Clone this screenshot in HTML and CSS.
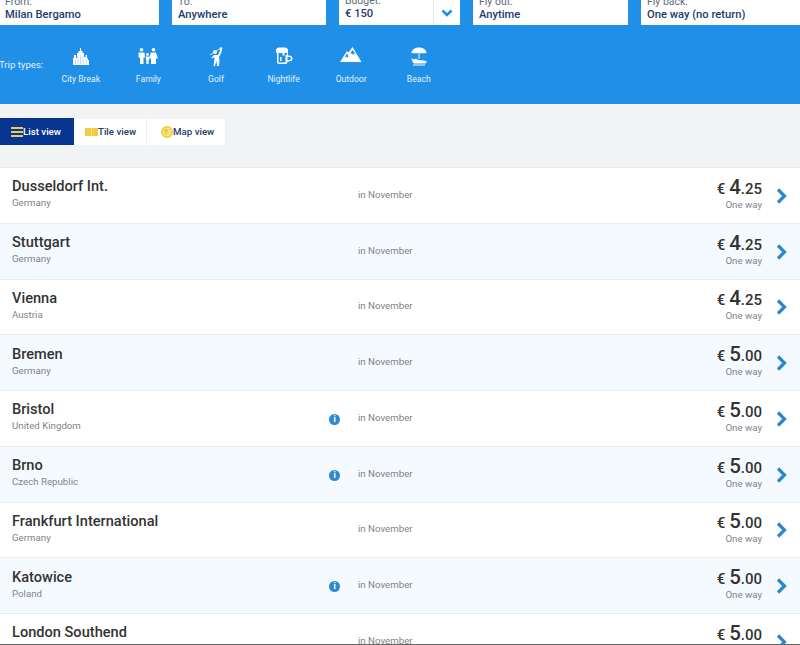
FILE: index.html
```html
<!DOCTYPE html>
<html lang="en">
<head>
  <meta charset="UTF-8">
  <meta name="viewport" content="width=device-width, initial-scale=1">
  <title>Fare finder</title>
  <link rel="stylesheet" href="styles.css">
</head>
<body>
  <header class="search">
    <div class="fields">
      <div class="field field-from"><label>From:</label><strong>Milan Bergamo</strong></div>
      <div class="field field-to"><label>To:</label><strong>Anywhere</strong></div>
      <div class="field field-budget">
        <div class="budget-value"><label>Budget:</label><strong>€ 150</strong></div>
        <div class="budget-toggle">
          <svg width="12" height="8" viewBox="0 0 12 8"><path d="M1.5 1.5 6 6l4.500-4.500" fill="none" stroke="#1f8fe0" stroke-width="2.600"/></svg>
        </div>
      </div>
      <div class="field field-out"><label>Fly out:</label><strong>Anytime</strong></div>
      <div class="field field-back"><label>Fly back:</label><strong>One way (no return)</strong></div>
    </div>
    <div class="trip-types">
      <span class="trip-label">Trip types:</span>
      <div class="trip">
        <svg width="18" height="20" viewBox="0 0 18 20" fill="#fff"><path d="M1 19v-7h1V9h2v3h1V7h1.500V5H8V2h1v3h1.500v2H12v4h1.500V9h1.500v3h1v2h1v5z"/><path d="M3.500 14v4M6 10v8M8.500 9v9M11 10v8M14 14v4" stroke="#8cc6f3" stroke-width=".6"/></svg>
        <span>City Break</span>
      </div>
      <div class="trip">
        <svg width="22" height="20" viewBox="0 0 22 20" fill="#fff"><circle cx="4.500" cy="3.800" r="1.800"/><circle cx="16.500" cy="3.800" r="1.800"/><circle cx="10.500" cy="8.500" r="1.400"/><path d="M1.500 6.500h6l.5 5H6.500V18H3v-6.500H1.500zM14 6.500h5l2 6h-2V18h-5v-5.500h-2zM8.800 10.500h3.400V14h-.6v4H9.400v-4h-.6z"/></svg>
        <span>Family</span>
      </div>
      <div class="trip">
        <svg width="14" height="20" viewBox="0 0 14 20" fill="#fff"><path d="M12 2 1 9" fill="none" stroke="#fff" stroke-width=".8"/><circle cx="6" cy="6" r="2"/><circle cx="12" cy="2.500" r="1.300"/><path d="M5 9h4l1.500-3 1-3 1.500.5-1 4-2 3.500.500 3.500L10 20H8l-.5-5.500L6 20H4.500l1-7-.5-2-1.500 1.500-1-.8z"/></svg>
        <span>Golf</span>
      </div>
      <div class="trip">
        <svg width="18" height="20" viewBox="0 0 18 20" fill="#fff"><path d="M1 4.500C1 2.500 2.500 1.500 4 1.500h6c1.500 0 3 1 3 3V7H9.500v2.500h-2V7H1z"/><path fill-rule="evenodd" d="M2 7h1.500v9.500h7V9H12v2h0V7h1v2.500h1c2 0 3.500 1.200 3.500 3s-1.500 3-3.500 3h-1.500V16c0 1-.8 2-2 2H4c-1.200 0-2-1-2-2zM12.500 11v3H14c1.200 0 2-.6 2-1.500s-.8-1.500-2-1.500z"/><path d="M5 11h1.500v4H5z"/></svg>
        <span>Nightlife</span>
      </div>
      <div class="trip">
        <svg width="22" height="20" viewBox="0 1 22 20" fill="#fff"><path fill-rule="evenodd" d="M0 17 7 6l1.500 1.500L12.500 2 21.500 17zM7 8.500 4.500 12.500l2-1 1 1.500 1-2zM12.500 5 10 9l2-.8 1 1.800 1-1.800 2 1.300z"/></svg>
        <span>Outdoor</span>
      </div>
      <div class="trip">
        <svg width="18" height="20" viewBox="0 0 18 20" fill="#fff"><path d="M1.500 7.500C1.500 4 4.500 1.500 9 1.500s7.500 2.500 7.500 6c-1-.8-2-.8-3 0-1-.8-2-.8-3 0-1-.8-2-.8-3 0-1-.8-2-.8-3 0-1-.8-2-.8-3 0z"/><path d="M8.500 7.500h1V13h-1z"/><path d="M1 12.500 3 13l1 .5 2-1 2 1.500 6 .5 3 1-1.500 2H4l-2-2 1 0z"/><path d="M3 18.500h12v1H3z"/></svg>
        <span>Beach</span>
      </div>
    </div>
  </header>

  <div class="view-bar">
    <div class="views">
      <a class="view active" href="#">
        <svg width="12" height="10" viewBox="0 0 12 10" fill="#e8cb5a"><path d="M0 0h12v2H0zM0 4h12v2H0zM0 8h12v2H0z"/></svg>
        List view
      </a>
      <a class="view" href="#">
        <svg width="13" height="8" viewBox="0 0 13 8" fill="#f3cd3e"><path d="M0 0h6.300v8H0zM6.700 0H13v8H6.700z"/></svg>
        Tile view
      </a>
      <a class="view view-map" href="#">
        <svg width="12" height="12" viewBox="0 0 12 12"><circle cx="6" cy="6" r="5.200" fill="#f9e08a" stroke="#f1c933" stroke-width="1.400"/><path d="M3.500 3h3l1 2-2 1 1 3-2-1-1-3z" fill="#f1c933"/></svg>
        Map view
      </a>
    </div>
  </div>

  <main class="results">
    <div class="row">
      <div class="place"><h3>Dusseldorf Int.</h3><p>Germany</p></div>
      <div class="info"></div>
      <div class="when">in November</div>
      <div class="price"><div class="amount">€ <b>4</b><i>.25</i></div><small>One way</small></div>
      <svg class="chevron" width="11" height="16" viewBox="0 0 11 16"><path d="M2 1.500 8.500 8 2 14.500" fill="none" stroke="#2b87cc" stroke-width="3.200"/></svg>
    </div>
    <div class="row">
      <div class="place"><h3>Stuttgart</h3><p>Germany</p></div>
      <div class="info"></div>
      <div class="when">in November</div>
      <div class="price"><div class="amount">€ <b>4</b><i>.25</i></div><small>One way</small></div>
      <svg class="chevron" width="11" height="16" viewBox="0 0 11 16"><path d="M2 1.500 8.500 8 2 14.500" fill="none" stroke="#2b87cc" stroke-width="3.200"/></svg>
    </div>
    <div class="row">
      <div class="place"><h3>Vienna</h3><p>Austria</p></div>
      <div class="info"></div>
      <div class="when">in November</div>
      <div class="price"><div class="amount">€ <b>4</b><i>.25</i></div><small>One way</small></div>
      <svg class="chevron" width="11" height="16" viewBox="0 0 11 16"><path d="M2 1.500 8.500 8 2 14.500" fill="none" stroke="#2b87cc" stroke-width="3.200"/></svg>
    </div>
    <div class="row">
      <div class="place"><h3>Bremen</h3><p>Germany</p></div>
      <div class="info"></div>
      <div class="when">in November</div>
      <div class="price"><div class="amount">€ <b>5</b><i>.00</i></div><small>One way</small></div>
      <svg class="chevron" width="11" height="16" viewBox="0 0 11 16"><path d="M2 1.500 8.500 8 2 14.500" fill="none" stroke="#2b87cc" stroke-width="3.200"/></svg>
    </div>
    <div class="row">
      <div class="place"><h3>Bristol</h3><p>United Kingdom</p></div>
      <div class="info"><span class="info-dot">i</span></div>
      <div class="when">in November</div>
      <div class="price"><div class="amount">€ <b>5</b><i>.00</i></div><small>One way</small></div>
      <svg class="chevron" width="11" height="16" viewBox="0 0 11 16"><path d="M2 1.500 8.500 8 2 14.500" fill="none" stroke="#2b87cc" stroke-width="3.200"/></svg>
    </div>
    <div class="row">
      <div class="place"><h3>Brno</h3><p>Czech Republic</p></div>
      <div class="info"><span class="info-dot">i</span></div>
      <div class="when">in November</div>
      <div class="price"><div class="amount">€ <b>5</b><i>.00</i></div><small>One way</small></div>
      <svg class="chevron" width="11" height="16" viewBox="0 0 11 16"><path d="M2 1.500 8.500 8 2 14.500" fill="none" stroke="#2b87cc" stroke-width="3.200"/></svg>
    </div>
    <div class="row">
      <div class="place"><h3>Frankfurt International</h3><p>Germany</p></div>
      <div class="info"></div>
      <div class="when">in November</div>
      <div class="price"><div class="amount">€ <b>5</b><i>.00</i></div><small>One way</small></div>
      <svg class="chevron" width="11" height="16" viewBox="0 0 11 16"><path d="M2 1.500 8.500 8 2 14.500" fill="none" stroke="#2b87cc" stroke-width="3.200"/></svg>
    </div>
    <div class="row">
      <div class="place"><h3>Katowice</h3><p>Poland</p></div>
      <div class="info"><span class="info-dot">i</span></div>
      <div class="when">in November</div>
      <div class="price"><div class="amount">€ <b>5</b><i>.00</i></div><small>One way</small></div>
      <svg class="chevron" width="11" height="16" viewBox="0 0 11 16"><path d="M2 1.500 8.500 8 2 14.500" fill="none" stroke="#2b87cc" stroke-width="3.200"/></svg>
    </div>
    <div class="row">
      <div class="place"><h3>London Southend</h3><p>United Kingdom</p></div>
      <div class="info"></div>
      <div class="when">in November</div>
      <div class="price"><div class="amount">€ <b>5</b><i>.00</i></div><small>One way</small></div>
      <svg class="chevron" width="11" height="16" viewBox="0 0 11 16"><path d="M2 1.500 8.500 8 2 14.500" fill="none" stroke="#2b87cc" stroke-width="3.200"/></svg>
    </div>
  </main>
  <div class="page-edge"></div>
</body>
</html>
```

FILE: styles.css
```css
html, body {
  height: 100%;
}
body {
  font-family: Roboto, "Liberation Sans", sans-serif;
  background-color: #f2f3f5;
  margin: 0;
  padding: 0;
  color: #333;
  height: 645px;
  overflow: hidden;
  display: flex;
  flex-direction: column;
}

.search {
  background-color: #1f8fe8;
  height: 104px;
  flex: none;
}
.fields {
  display: flex;
  gap: 13px;
  height: 25px;
  overflow: hidden;
  margin-left: -1px;
}
.field {
  background-color: #fff;
  height: 25px;
  box-sizing: border-box;
  padding: 0 6px;
  display: flex;
  flex-direction: column;
  justify-content: flex-end;
  flex: none;
}
.field label {
  font-size: 10.500px;
  line-height: 13px;
  color: #5e6b7c;
}
.field strong {
  font-size: 11.200px;
  line-height: 14px;
  font-weight: 500;
  color: #1f3a6b;
  padding-bottom: 3px;
}
.field-from { width: 160px; }
.field-to { width: 154px; }
.field-budget {
  width: 121px;
  flex-direction: row;
  padding: 0;
}
.field-out { width: 155px; }
.field-back { width: 161px; }
.budget-value {
  flex: 1;
  padding: 0 6px;
  display: flex;
  flex-direction: column;
  justify-content: flex-end;
}
.budget-value strong {
  color: #1f3a6b;
  padding-bottom: 4px;
}
.budget-toggle {
  width: 26px;
  border-left: 1px solid #e6e9ee;
  display: flex;
  align-items: center;
  justify-content: center;
}

.trip-types {
  display: flex;
  height: 79px;
  align-items: flex-start;
}
.trip-label {
  width: 48px;
  margin-left: -1px;
  margin-top: 33px;
  font-size: 9.600px;
  line-height: 13px;
  color: #e4f2fd;
  white-space: nowrap;
  flex: none;
}
.trip {
  width: 67.600px;
  flex: none;
  display: flex;
  flex-direction: column;
  align-items: center;
  padding-top: 21px;
}
.trip svg {
  height: 20px;
  display: block;
}
.trip span {
  margin-top: 8px;
  font-size: 8.600px;
  line-height: 11px;
  color: #e4f2fd;
}

/* list / tile / map switch */
.view-bar {
  height: 64px;
  flex: none;
  box-sizing: border-box;
  padding-top: 14px;
  border-bottom: 1px solid #e8e9eb;
}
.views {
  display: flex;
  align-items: center;
}
.view {
  display: flex;
  align-items: center;
  gap: 0;
  height: 26px;
  box-sizing: border-box;
  padding: 0 10px 0 11px;
  background-color: #fff;
  border-right: 1px solid #eceef0;
  color: #1f3a6b;
  font-size: 9.700px;
  font-weight: 500;
  text-decoration: none;
}
.view.active {
  height: 27px;
  width: 74px;
  background-color: #073590;
  color: #fff;
  border-right: none;
  padding: 0 0 0 11px;
}
.view-map {
  padding: 0 11px 0 14px;
}

/* results */
.results {
  flex: 1;
  min-height: 0;
  overflow: hidden;
}
.row {
  height: 55.750px;
  box-sizing: border-box;
  display: flex;
  align-items: center;
  background-color: #fff;
  border-bottom: 1px solid #e9edf1;
}
.row:nth-child(even) {
  background-color: #f5fafe;
}
.place {
  width: 317px;
  padding-left: 12px;
  flex: none;
  margin-top: -3px;
}
.place h3 {
  margin: 0;
  font-size: 14.600px;
  line-height: 18px;
  font-weight: 500;
  color: #333;
}
.place p {
  margin: 1px 0 0;
  font-size: 9.700px;
  line-height: 14px;
  color: #7f8389;
}
.info {
  width: 29px;
  flex: none;
}
.info-dot {
  display: block;
  width: 11px;
  height: 11px;
  margin-top: 2px;
  border-radius: 50%;
  background-color: #2a8ad4;
  color: #fff;
  font-size: 8.500px;
  font-weight: 700;
  line-height: 11px;
  text-align: center;
}
.when {
  flex: 1;
  font-size: 9.700px;
  color: #7f8389;
  margin-top: -2px;
}
.price {
  text-align: right;
  margin-top: -5px;
}
.amount {
  font-size: 15px;
  line-height: 22px;
  font-weight: 500;
  color: #333;
}
.amount b {
  font-size: 20.500px;
  font-weight: 500;
}
.amount i {
  font-style: normal;
  font-size: 15px;
}
.price small {
  display: block;
  margin-top: -1px;
  font-size: 9.700px;
  line-height: 11px;
  color: #7f8389;
}
.chevron {
  margin: 1px 13px 0 14px;
  flex: none;
}
.page-edge {
  height: 1px;
  flex: none;
  background-color: #666;
}
```
